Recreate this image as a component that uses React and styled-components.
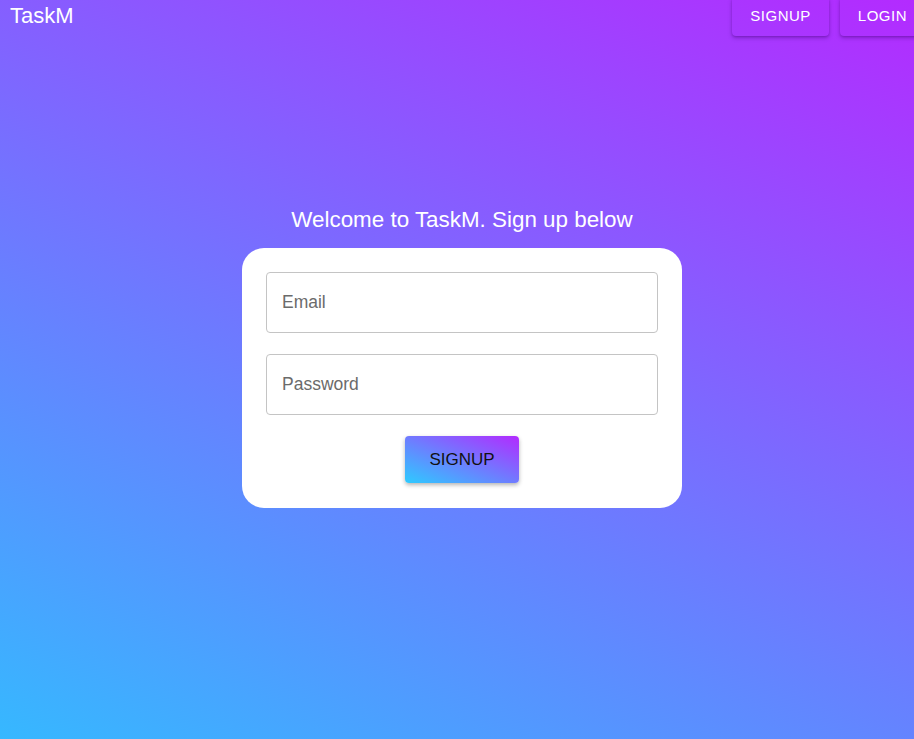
import React, { useState } from "react";
import styled, { createGlobalStyle } from "styled-components";

const GlobalStyle = createGlobalStyle`
  html, body {
    margin: 0;
    padding: 0;
    overflow: hidden;
  }
  body {
    font-family: "Liberation Sans", Arial, sans-serif;
  }
`;

const App = () => {
  const [email, setEmail] = useState("");
  const [password, setPassword] = useState("");

  return (
    <Page>
      <GlobalStyle />
      <Header>
        <Brand>TaskM</Brand>
        <Nav>
          <NavButton>Signup</NavButton>
          <NavButton>Login</NavButton>
        </Nav>
      </Header>

      <Main>
        <Title>Welcome to TaskM. Sign up below</Title>
        <Card>
          <Field
            placeholder="Email"
            value={email}
            onChange={(e) => setEmail(e.target.value)}
          />
          <Field
            type="password"
            placeholder="Password"
            value={password}
            onChange={(e) => setPassword(e.target.value)}
          />
          <SubmitButton>Signup</SubmitButton>
        </Card>
      </Main>
    </Page>
  );
};

export default App;

const Page = styled.div`
  width: 924px;
  height: 100vh;
  overflow: hidden;
  background: linear-gradient(25deg, #36b8ff 0%, #b42aff 100%);
  display: flex;
  flex-direction: column;
`;

const Header = styled.header`
  display: flex;
  justify-content: space-between;
  align-items: flex-start;
  height: 36px;
`;

const Brand = styled.div`
  color: #fff;
  font-size: 22px;
  padding: 3px 0 0 10px;
`;

const Nav = styled.nav`
  display: flex;
  gap: 11px;
  margin-top: -3px;
  margin-right: -1px;
`;

const NavButton = styled.button`
  font-family: "Liberation Sans", Arial, sans-serif;
  font-size: 15px;
  letter-spacing: 0.5px;
  text-transform: uppercase;
  color: #fff;
  background: transparent;
  border: none;
  border-radius: 4px;
  height: 39px;
  padding: 0 18px 2px;
  box-shadow: 0 2px 4px rgba(60, 0, 110, 0.35), 0 1px 2px rgba(60, 0, 110, 0.2);
  cursor: pointer;
`;

const Main = styled.main`
  display: flex;
  flex-direction: column;
  align-items: center;
  padding-top: 170px;
`;

const Title = styled.h2`
  margin: 0 0 14px;
  font-weight: 400;
  font-size: 22.4px;
  line-height: 28px;
  color: #fff;
`;

const Card = styled.div`
  width: 392px;
  padding: 24px 24px 25px;
  background: #fff;
  border-radius: 22px;
  display: flex;
  flex-direction: column;
  gap: 21px;
`;

const Field = styled.input`
  box-sizing: border-box;
  height: 61px;
  width: 100%;
  padding: 0 15px;
  border: 1px solid #c4c4c4;
  border-radius: 4px;
  font-family: "Liberation Sans", Arial, sans-serif;
  font-size: 17.5px;
  color: #333;
  outline: none;

  &::placeholder {
    color: #6b6b6b;
  }
`;

const SubmitButton = styled.button`
  align-self: center;
  height: 47px;
  padding: 0 24px;
  border: none;
  border-radius: 4px;
  background: linear-gradient(to top right, #2dcbff, #b32aff);
  font-family: "Liberation Sans", Arial, sans-serif;
  font-size: 17px;
  text-transform: uppercase;
  color: #111;
  box-shadow: 0 2px 4px rgba(0, 0, 0, 0.3);
  cursor: pointer;
`;
